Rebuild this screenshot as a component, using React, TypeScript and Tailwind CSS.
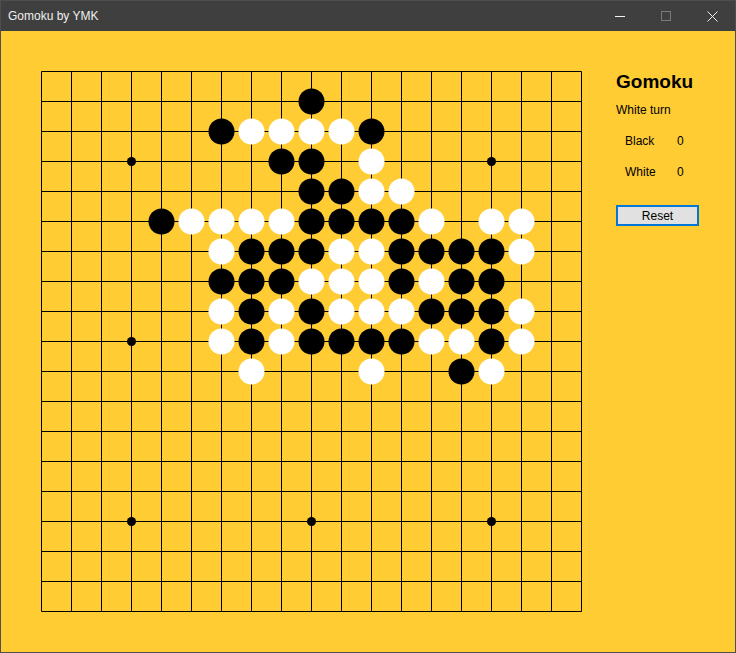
import React from 'react';

type Stone = [number, number, 'b' | 'w'];

// board rows written as "col:color" lists, row index is the key
const layout: Record<number, string> = {
  1: 'b9',
  2: 'b6 w7 w8 w9 w10 b11',
  3: 'b8 b9 w11',
  4: 'b9 b10 w11 w12',
  5: 'b4 w5 w6 w7 w8 b9 b10 b11 b12 w13 w15 w16',
  6: 'w6 b7 b8 b9 w10 w11 b12 b13 b14 b15 w16',
  7: 'b6 b7 b8 w9 w10 w11 b12 w13 b14 b15',
  8: 'w6 b7 w8 b9 w10 w11 w12 b13 b14 b15 w16',
  9: 'w6 b7 w8 b9 b10 b11 b12 w13 w14 b15 w16',
  10: 'w7 w11 b14 w15',
};

const stones: Stone[] = Object.entries(layout).flatMap(([row, s]) =>
  s.split(' ').map((t) => [Number(t.slice(1)), Number(row), t[0] as 'b' | 'w'] as Stone)
);

const stars = [
  [3, 3], [9, 3], [15, 3],
  [3, 9], [9, 9], [15, 9],
  [3, 15], [9, 15], [15, 15],
];

const CELL = 30;
const OFF = 10.5;

const Board: React.FC = () => {
  const lines = Array.from({ length: 19 }, (_, i) => OFF + i * CELL);
  const end = OFF + 18 * CELL;
  return (
    <svg width={560} height={560} className="block shrink-0">
      {lines.map((p) => (
        <g key={p}>
          <line x1={p} y1={OFF} x2={p} y2={end} stroke="#000" strokeWidth={1} />
          <line x1={OFF} y1={p} x2={end} y2={p} stroke="#000" strokeWidth={1} />
        </g>
      ))}
      {stars.map(([c, r]) => (
        <circle key={`s${c}-${r}`} cx={OFF + c * CELL} cy={OFF + r * CELL} r={4.5} fill="#000" />
      ))}
      {stones.map(([c, r, col]) => (
        <circle
          key={`${c}-${r}`}
          cx={OFF + c * CELL}
          cy={OFF + r * CELL}
          r={13}
          fill={col === 'b' ? '#000' : '#fff'}
        />
      ))}
    </svg>
  );
};

const TitleBar: React.FC = () => (
  <div className="h-[30px] bg-[#3f3f3f] flex items-center justify-between text-[12px] text-[#f0f0f0]">
    <span className="pl-[7px] leading-[14px]">Gomoku by YMK</span>
    <div className="flex h-full items-center">
      <div className="w-[46px] h-full flex items-center justify-center">
        <svg width={10} height={10}>
          <line x1={0} y1={5.5} x2={10} y2={5.5} stroke="#f0f0f0" strokeWidth={1} />
        </svg>
      </div>
      <div className="w-[46px] h-full flex items-center justify-center">
        <svg width={10} height={10}>
          <rect x={0.5} y={0.5} width={9} height={9} fill="none" stroke="#7a7a7a" strokeWidth={1} />
        </svg>
      </div>
      <div className="w-[46px] h-full flex items-center justify-center">
        <svg width={11} height={11}>
          <path d="M0.5 0.5 L10.5 10.5 M10.5 0.5 L0.5 10.5" stroke="#f0f0f0" strokeWidth={1} />
        </svg>
      </div>
    </div>
  </div>
);

export default function App() {
  return (
    <div
      className="w-[736px] h-[653px] border border-[#4e4e4e] flex flex-col overflow-hidden"
      style={{ fontFamily: '"Liberation Sans", Arial, sans-serif' }}
    >
      <TitleBar />
      <div className="flex-1 bg-[#ffcc33] flex items-start pt-[30px] pl-[30px]">
        <Board />
        <div className="ml-[25px] mt-[10px] flex flex-col text-[12px] text-black">
          <h1 className="text-[19px] leading-[22px] font-bold">Gomoku</h1>
          <div className="mt-[10px] leading-[14px]">White turn</div>
          <div className="mt-[17px] flex leading-[14px] pl-[9px]">
            <span className="w-[52px]">Black</span>
            <span>0</span>
          </div>
          <div className="mt-[17px] flex leading-[14px] pl-[9px]">
            <span className="w-[52px]">White</span>
            <span>0</span>
          </div>
          <button className="mt-[26px] w-[83px] h-[21px] border-2 border-[#0078d7] bg-[#e1e1e1] text-[12px] leading-[14px] text-black flex items-center justify-center">
            Reset
          </button>
        </div>
      </div>
    </div>
  );
}
